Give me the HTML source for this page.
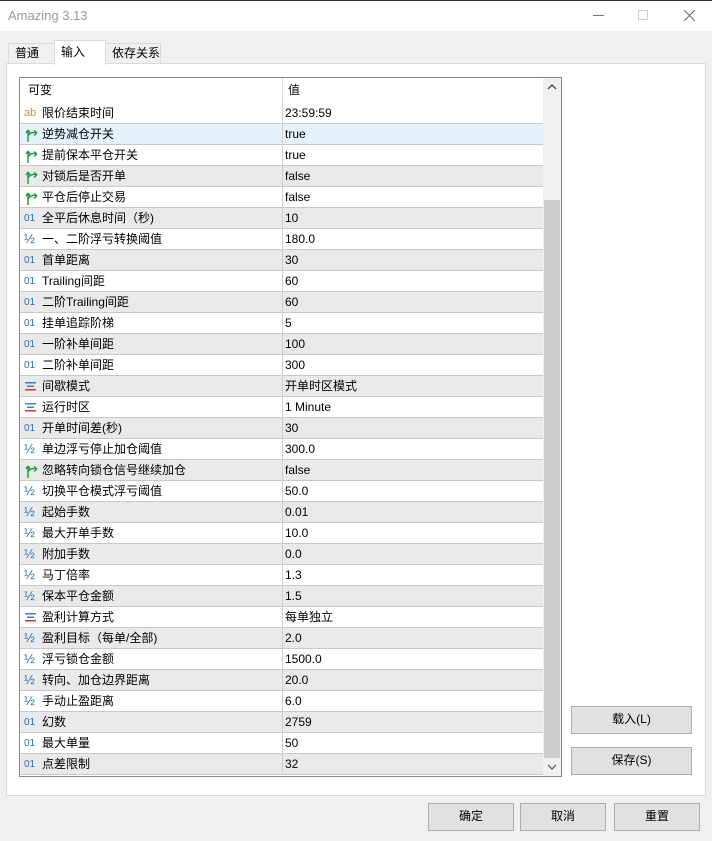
<!DOCTYPE html>
<html><head><meta charset="utf-8"><style>
*{margin:0;padding:0;box-sizing:border-box}
body{width:712px;height:841px;background:#f0f0f0;font-family:"Liberation Sans","Noto Sans CJK SC",sans-serif;font-size:12px;line-height:14px;color:#000;position:relative;overflow:hidden}
.a{position:absolute}
#title{left:0;top:0;width:712px;height:31px;background:#fff;border-top:1px solid #333}
#title span{position:absolute;left:8px;top:7px;font-size:13px;line-height:16px;color:#999}
.tab{position:absolute;top:43px;height:21px;border:1px solid #d9d9d9;border-bottom:none;background:#f0f0f0;font-size:12px;line-height:14px;padding:2px 0 0 6px}
#panel{left:6px;top:63px;width:700px;height:733px;background:#fff;border:1px solid #d9d9d9}
#list{left:19px;top:77px;width:543px;height:700px;border:1px solid #828790;background:#fff;overflow:hidden}
.row{position:absolute;left:0;width:523px;height:21px;border-bottom:1px solid #c8c8c8}
.row .n{position:absolute;left:22px;top:3px;white-space:nowrap;line-height:14px}
.row .v{position:absolute;left:265px;top:3px;line-height:14px}
.row .sep{position:absolute;left:262px;top:0;width:1px;height:21px;background:#d0d0d0}
.ic{position:absolute;left:4px;top:3px;font-size:11px;line-height:14px}
.g{background:#e9e9e9}
.s{background:#e5f1fb}
#sb{left:523px;top:0;width:18px;height:698px;background:#f0f0f0}
.btn{position:absolute;background:#e1e1e1;border:1px solid #adadad;text-align:center;line-height:25px;font-size:12px}
</style></head><body>
<div class="a" id="title"><span>Amazing 3.13</span>
<div class="a" style="left:593px;top:14px;width:11px;height:1px;background:#777"></div>
<div class="a" style="left:638px;top:9px;width:10px;height:10px;border:1px solid #ccc"></div>
<svg class="a" style="left:684px;top:9px" width="11" height="11"><path d="M0 0L11 11M11 0L0 11" stroke="#666" stroke-width="1"/></svg>
</div>
<div class="tab" style="left:8px;width:47px">普通</div>
<div class="tab" style="left:105px;width:56px">依存关系</div>
<div class="a" id="panel"></div>
<div class="tab" style="left:54px;top:40px;width:52px;height:25px;background:#fff;padding-top:4px">输入</div>
<div class="a" id="list">
<div class="a" style="left:0;top:0;width:523px;height:25px;background:#fff"><span class="a" style="left:8px;top:5px">可变</span><span class="a" style="left:268px;top:5px">值</span><div class="a" style="left:262px;top:0;width:1px;height:25px;background:#e0e0e0"></div></div>
<div id="rows"></div>
<div class="a" id="sb">
<svg class="a" style="left:4px;top:6px" width="10" height="6"><path d="M1 5L5 1L9 5" stroke="#555" stroke-width="1.5" fill="none"/></svg>
<div class="a" style="left:1px;top:122px;width:16px;height:558px;background:#cdcdcd"></div>
<svg class="a" style="left:4px;top:686px" width="10" height="6"><path d="M1 1L5 5L9 1" stroke="#555" stroke-width="1.2" fill="none"/></svg>
</div>
</div>
<div class="btn" style="left:571px;top:706px;width:121px;height:28px">载入(L)</div>
<div class="btn" style="left:571px;top:747px;width:121px;height:28px">保存(S)</div>
<div class="btn" style="left:428px;top:803px;width:86px;height:28px">确定</div>
<div class="btn" style="left:520px;top:803px;width:86px;height:28px">取消</div>
<div class="btn" style="left:614px;top:803px;width:86px;height:28px">重置</div>
<script>
var d=[["ab","限价结束时间","23:59:59"],["b","逆势减仓开关","true"],["b","提前保本平仓开关","true"],["b","对锁后是否开单","false"],["b","平仓后停止交易","false"],["i","全平后休息时间（秒)","10"],["f","一、二阶浮亏转换阈值","180.0"],["i","首单距离","30"],["i","Trailing间距","60"],["i","二阶Trailing间距","60"],["i","挂单追踪阶梯","5"],["i","一阶补单间距","100"],["i","二阶补单间距","300"],["e","间歇模式","开单时区模式"],["e","运行时区","1 Minute"],["i","开单时间差(秒)","30"],["f","单边浮亏停止加仓阈值","300.0"],["b","忽略转向锁仓信号继续加仓","false"],["f","切换平仓模式浮亏阈值","50.0"],["f","起始手数","0.01"],["f","最大开单手数","10.0"],["f","附加手数","0.0"],["f","马丁倍率","1.3"],["f","保本平仓金额","1.5"],["e","盈利计算方式","每单独立"],["f","盈利目标（每单/全部)","2.0"],["f","浮亏锁仓金额","1500.0"],["f","转向、加仓边界距离","20.0"],["f","手动止盈距离","6.0"],["i","幻数","2759"],["i","最大单量","50"],["i","点差限制","32"]];
var h="";
d.forEach(function(r,i){
var c=i==1?"s":(i%2?"g":"");
var ic;
if(r[0]=="ab")ic='<span class="ic" style="color:#c8913a">ab</span>';
else if(r[0]=="i")ic='<span class="ic" style="color:#2a6fb5;font-size:10px;top:4px">01</span>';
else if(r[0]=="f")ic='<span class="ic" style="color:#2a6fb5;font-size:13px;top:3px">½</span>';
else if(r[0]=="b")ic='<svg class="ic" width="16" height="16" style="top:3px"><path d="M4 15L4 3M4 3L2 6M4 3L6 6M4 9Q7 4 13 6M13 6L10 3.5M13 6L10 8.5" stroke="#1a9a3a" stroke-width="1.4" fill="none"/></svg>';
else ic='<svg class="ic" width="14" height="12" style="top:5px"><rect x="1" y="1" width="11" height="1.5" fill="#3a7bd5"/><rect x="3" y="4.5" width="7" height="1.5" fill="#3a7bd5"/><rect x="1" y="8" width="11" height="1.5" fill="#d33"/></svg>';
h+='<div class="row '+c+'" style="top:'+(25+i*21)+'px">'+ic+'<span class="n">'+r[1]+'</span><div class="sep"></div><span class="v">'+r[2]+'</span></div>';
});
document.getElementById("rows").innerHTML=h;
</script>
</body></html>
